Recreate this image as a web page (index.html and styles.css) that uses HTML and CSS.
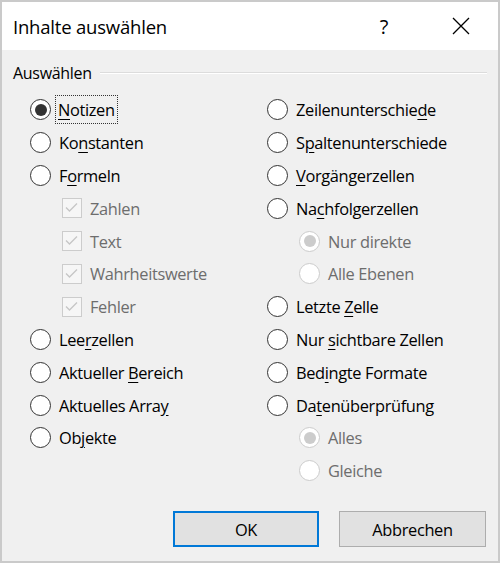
FILE: index.html
```html
<!DOCTYPE html>
<html lang="de">
<head>
<meta charset="utf-8">
<title>Inhalte auswählen</title>
<link rel="stylesheet" href="styles.css">
</head>
<body>
<div class="dialog">
  <div class="titlebar">
    <span class="title">Inhalte auswählen</span>
    <span class="help">?</span>
    <span class="close"><svg width="18" height="18" viewBox="0 0 18 18"><path d="M1 1 L17 17 M17 1 L1 17" stroke="#000" stroke-width="1.3" fill="none"/></svg></span>
  </div>
  <div class="content">
    <div class="group-head"><span class="group-label">Auswählen</span><span class="group-line"></span></div>
    <div class="columns">
      <div class="col">
        <div class="row"><span class="radio checked"></span><span class="label focus"><u>N</u>otizen</span></div>
        <div class="row"><span class="radio"></span><span class="label">Ko<u>n</u>stanten</span></div>
        <div class="row"><span class="radio"></span><span class="label">F<u>o</u>rmeln</span></div>
        <div class="row sub"><span class="check"><svg width="17" height="17" viewBox="0 0 17 17"><path d="M3 8.5 L6.5 12 L14 4.5" stroke="#c6c6c6" stroke-width="1.3" fill="none"/></svg></span><span class="label disabled">Zahlen</span></div>
        <div class="row sub"><span class="check"><svg width="17" height="17" viewBox="0 0 17 17"><path d="M3 8.5 L6.5 12 L14 4.5" stroke="#c6c6c6" stroke-width="1.3" fill="none"/></svg></span><span class="label disabled">Text</span></div>
        <div class="row sub"><span class="check"><svg width="17" height="17" viewBox="0 0 17 17"><path d="M3 8.5 L6.5 12 L14 4.5" stroke="#c6c6c6" stroke-width="1.3" fill="none"/></svg></span><span class="label disabled">Wahrheitswerte</span></div>
        <div class="row sub"><span class="check"><svg width="17" height="17" viewBox="0 0 17 17"><path d="M3 8.5 L6.5 12 L14 4.5" stroke="#c6c6c6" stroke-width="1.3" fill="none"/></svg></span><span class="label disabled">Fehler</span></div>
        <div class="row"><span class="radio"></span><span class="label">Lee<u>r</u>zellen</span></div>
        <div class="row"><span class="radio"></span><span class="label">Aktueller <u>B</u>ereich</span></div>
        <div class="row"><span class="radio"></span><span class="label">Aktuelles Arra<u>y</u></span></div>
        <div class="row"><span class="radio"></span><span class="label">Ob<u>j</u>ekte</span></div>
      </div>
      <div class="col">
        <div class="row"><span class="radio"></span><span class="label">Zeilenunterschie<u>d</u>e</span></div>
        <div class="row"><span class="radio"></span><span class="label">S<u>p</u>altenunterschiede</span></div>
        <div class="row"><span class="radio"></span><span class="label"><u>V</u>orgängerzellen</span></div>
        <div class="row"><span class="radio"></span><span class="label">Na<u>c</u>hfolgerzellen</span></div>
        <div class="row sub"><span class="radio off checked"></span><span class="label disabled">Nur direkte</span></div>
        <div class="row sub"><span class="radio off"></span><span class="label disabled">Alle Ebenen</span></div>
        <div class="row"><span class="radio"></span><span class="label">Letzte <u>Z</u>elle</span></div>
        <div class="row"><span class="radio"></span><span class="label">Nur <u>s</u>ichtbare Zellen</span></div>
        <div class="row"><span class="radio"></span><span class="label">Bed<u>i</u>ngte Formate</span></div>
        <div class="row"><span class="radio"></span><span class="label">Da<u>t</u>enüberprüfung</span></div>
        <div class="row sub"><span class="radio off checked"></span><span class="label disabled">Alles</span></div>
        <div class="row sub"><span class="radio off"></span><span class="label disabled">Gleiche</span></div>
      </div>
    </div>
    <div class="buttons">
      <button class="btn default">OK</button>
      <button class="btn">Abbrechen</button>
    </div>
  </div>
</div>
</body>
</html>
```
FILE: styles.css
```css
html, body {
  margin: 0;
  padding: 0;
  background: #f0f0f0;
}
body {
  font-family: "Open Sans", "Noto Sans", sans-serif;
  color: #000;
}
.dialog {
  width: 500px;
  height: 563px;
  box-sizing: border-box;
  border: 2px solid #cacaca;
  background: #f0f0f0;
  display: flex;
  flex-direction: column;
}
.titlebar {
  height: 48px;
  background: #fff;
  display: flex;
  align-items: center;
  padding-left: 11px;
  flex-shrink: 0;
}
.title {
  font-size: 18.5px;
  flex: 1;
  letter-spacing: -0.2px;
  font-weight: 500;
}
.help {
  font-size: 20px;
  width: 20px;
  text-align: center;
  margin-right: 58px;
  font-weight: 500;
}
.close {
  display: flex;
  margin-right: 28px;
}
.content {
  flex: 1;
  display: flex;
  flex-direction: column;
}
.group-head {
  display: flex;
  align-items: center;
  height: 24px;
  margin-top: 11px;
  padding-left: 11px;
  padding-right: 11px;
  gap: 8px;
}
.group-label {
  font-size: 16px;
  letter-spacing: -0.3px;
  font-weight: 500;
}
.group-line {
  flex: 1;
  height: 0;
  border-top: 1px solid #dcdcdc;
  border-bottom: 1px solid #fff;
  margin-top: -1px;
}
.columns {
  display: grid;
  grid-template-columns: 237px 1fr;
  padding-left: 28px;
  margin-top: 8.5px;
}
.row {
  height: 32.8px;
  display: flex;
  align-items: center;
  gap: 7px;
  font-size: 16.4px;
  letter-spacing: -0.35px;
  font-weight: 500;
}
.row.sub {
  padding-left: 32px;
}
.radio {
  width: 21px;
  height: 21px;
  box-sizing: border-box;
  border: 1.6px solid #333;
  border-radius: 50%;
  background: #fff;
  flex-shrink: 0;
  display: flex;
  align-items: center;
  justify-content: center;
}
.radio.checked::after {
  content: "";
  width: 12px;
  height: 12px;
  border-radius: 50%;
  background: #333;
}
.radio.off {
  border-color: #cccccc;
}
.radio.off.checked::after {
  background: #cccccc;
}
.check {
  width: 20px;
  height: 20px;
  box-sizing: border-box;
  border: 1.5px solid #cccccc;
  background: #f6f6f6;
  flex-shrink: 0;
  display: flex;
}
.label {
  white-space: nowrap;
  padding: 1px 1px;
}
.label u {
  text-underline-offset: 3px;
}
.label.focus {
  outline: 1px dotted #333;
  outline-offset: 1px;
  margin-left: -1px;
}
.disabled {
  color: #6d6d6d;
}
.buttons {
  margin-top: auto;
  display: flex;
  justify-content: flex-end;
  gap: 20px;
  padding-right: 12px;
  padding-bottom: 14px;
}
.btn {
  font-family: "Open Sans", "Noto Sans", sans-serif;
  font-size: 16.4px;
  font-weight: 500;
  letter-spacing: -0.35px;
  height: 36px;
  width: 147px;
  background: #e1e1e1;
  border: 1.5px solid #adadad;
  color: #000;
  padding: 0;
}
.btn.default {
  border: 2px solid #0078d7;
  width: 146px;
}
```
